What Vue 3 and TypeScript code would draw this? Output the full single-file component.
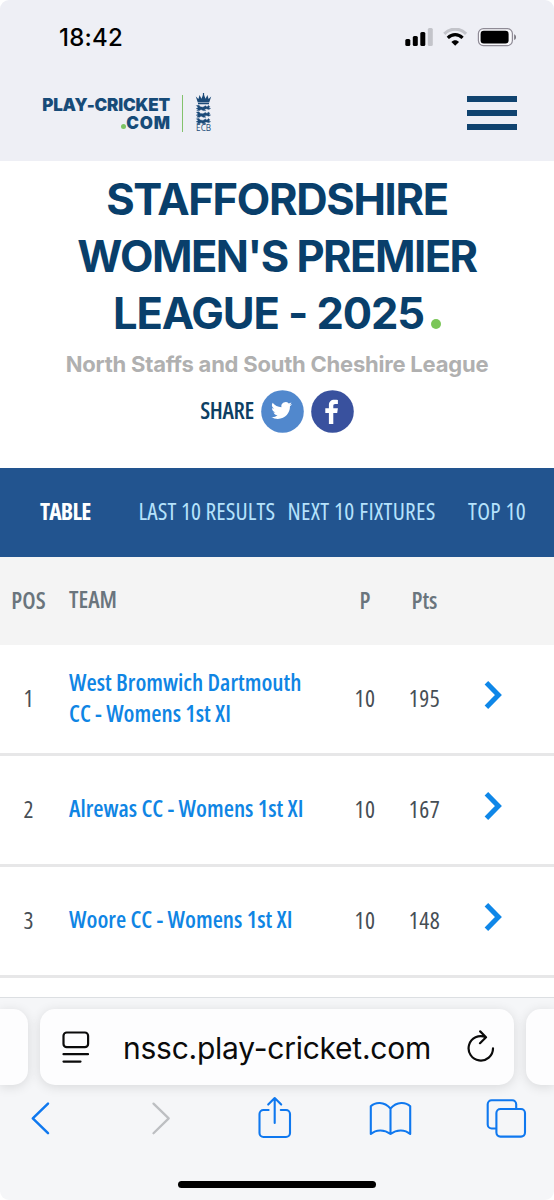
<script setup lang="ts">
interface Row {
  pos: number
  team: string
  played: number
  points: number
}

const tabs = [
  { label: 'TABLE', cls: 'tab-table' },
  { label: 'LAST 10 RESULTS', cls: 'tab-results' },
  { label: 'NEXT 10 FIXTURES', cls: 'tab-fixtures' },
  { label: 'TOP 10', cls: 'tab-top' },
]

const rows: Row[] = [
  { pos: 1, team: 'West Bromwich Dartmouth\nCC - Womens 1st XI', played: 10, points: 195 },
  { pos: 2, team: 'Alrewas CC - Womens 1st XI', played: 10, points: 167 },
  { pos: 3, team: 'Woore CC - Womens 1st XI', played: 10, points: 148 },
]

const lions = [12, 18.6, 25.2]
</script>

<template>
  <div class="phone">
    <header class="top">
      <div class="status">
        <span class="clock">18:42</span>
        <svg class="status-icons" width="112" height="20" viewBox="0 0 112 20">
          <rect x="0.3" y="11" width="5" height="7" rx="1.5" />
          <rect x="7.8" y="8" width="5" height="10" rx="1.5" />
          <rect x="15.3" y="4" width="5" height="14" rx="1.5" />
          <rect x="22.8" y="0" width="5" height="18" rx="1.5" fill="#c3c4ca" />
          <path d="M39.3 5.8C45.7-.4 54.7-.4 61.1 5.8" fill="none" stroke="#c3c4ca" stroke-width="3.2" />
          <path d="M42.8 9.8C47.2 5.6 53.2 5.6 57.6 9.8" fill="none" stroke="#000" stroke-width="3.2" />
          <path d="M46.4 14C48.6 11.6 51.8 11.6 54 14L50.2 17.8Z" />
          <rect x="73.4" y="0.6" width="34" height="17" rx="5" fill="#f8f8fb" stroke="#8f8b96" stroke-width="1.2" />
          <rect x="75.6" y="2.7" width="28" height="12.8" rx="3.2" />
          <path d="M109.2 6.2C111.6 7 111.6 11.2 109.2 12Z" fill="#77747d" />
        </svg>
      </div>
      <div class="brand-bar">
        <div class="wordmark">
          <div class="word-line play">PLAY-CRICKET</div>
          <div class="word-line com"><i></i>COM</div>
        </div>
        <div class="brand-rule"></div>
        <svg class="ecb" width="18" height="40" viewBox="0 0 18 40" fill="#1b4a78">
          <path d="M.8 3.4 3.4 6 4.6 2 6.4 5.8 8.5.8 10.6 5.8 12.4 2 13.6 6 16.2 3.4 14.2 9.6H2.8Z" />
          <path d="M3 10.1H14V11.2H3ZM7.9 0H9.1V3H7.9Z" />
          <path
            v-for="y in lions"
            :key="y"
            :transform="`translate(0 ${y})`"
            stroke="#1b4a78"
            stroke-width=".4"
            d="M1.4.6 4 .2 5.2 1.8 8 2.2 10.4.8 12 2 13.4.4 14.8 1.6 13.8 3 15.6 3.4 13.8 4.6 11.6 3.8 9.4 4.2 10.8 5.6H8.2L6 4.4 4.6 5.6H1.8L3.2 4.2 1.2 3.6 3.2 2.4Z"
          />
          <text x="8.6" y="38.2" text-anchor="middle" textLength="15" lengthAdjust="spacingAndGlyphs">ECB</text>
        </svg>
        <button class="menu" aria-label="Menu"><b></b><b></b><b></b></button>
      </div>
    </header>

    <section class="hero">
      <h1>
        <span class="l1">STAFFORDSHIRE</span>
        <span class="l2">WOMEN'S PREMIER</span>
        <span class="l3"><em>LEAGUE - 2025</em><i class="dot"></i></span>
      </h1>
      <p class="league"><span>North Staffs and South Cheshire League</span></p>
      <div class="share">
        <span class="share-label">SHARE</span>
        <svg width="43" height="43" viewBox="0 0 43 43">
          <circle cx="21.5" cy="21.5" r="21.3" fill="#5188cd" />
          <path
            transform="translate(10.2 10.1) scale(.87)"
            fill="#fff"
            d="M23.95 4.57a10 10 0 0 1-2.82.77 4.96 4.96 0 0 0 2.16-2.72c-.95.55-2 .96-3.13 1.18a4.92 4.92 0 0 0-8.38 4.48C7.69 8.1 4.07 6.13 1.64 3.16a4.92 4.92 0 0 0 1.52 6.57 4.9 4.9 0 0 1-2.23-.61v.06a4.92 4.92 0 0 0 3.95 4.83 5 5 0 0 1-2.21.08 4.94 4.94 0 0 0 4.6 3.42A9.87 9.87 0 0 1 0 19.54a13.99 13.99 0 0 0 7.55 2.21c9.05 0 14-7.5 14-13.98 0-.21 0-.42-.02-.63a9.94 9.94 0 0 0 2.46-2.55z"
          />
        </svg>
        <svg width="43" height="43" viewBox="0 0 43 43">
          <circle cx="21.5" cy="21.5" r="21.3" fill="#39519e" />
          <path fill="#fff" d="M17.9 34V22.9H14.3V18.3H17.9V15.2C17.9 11.7 20 9.8 23.3 9.8 24.8 9.8 26.1 9.9 26.9 10V14H24.3C22.6 14 22.3 14.9 22.3 16V18.3H26.9L26.2 22.9H22.3V34Z" />
        </svg>
      </div>
    </section>

    <nav class="tabs">
      <a v-for="t in tabs" :key="t.label" :class="t.cls">{{ t.label }}</a>
    </nav>

    <div class="grid head">
      <span class="c-pos">POS</span>
      <span class="c-team">TEAM</span>
      <span class="c-p">P</span>
      <span class="c-pts">Pts</span>
    </div>
    <div v-for="r in rows" :key="r.pos" class="grid row">
      <span class="c-pos">{{ r.pos }}</span>
      <a class="c-team">{{ r.team }}</a>
      <span class="c-p">{{ r.played }}</span>
      <span class="c-pts">{{ r.points }}</span>
      <svg class="go" width="20" height="28" viewBox="0 0 20 28">
        <path d="M2.4 1.8 14.4 14 2.4 26.2" fill="none" stroke="#0f87e8" stroke-width="5" />
      </svg>
    </div>
    <div class="filler"></div>

    <footer class="safari">
      <div class="pages">
        <div class="card"></div>
        <div class="card address">
          <svg class="site" width="28" height="34" viewBox="0 0 28 34" fill="none" stroke="#0b0b0b" stroke-width="2.2" stroke-linecap="round">
            <rect x="1.5" y="1.5" width="24.6" height="14.6" rx="3.2" />
            <path d="M1.5 23.2H26M1.5 30.6H18.5" />
          </svg>
          <span class="url">nssc.play-cricket.com</span>
          <svg width="28" height="34" viewBox="0 0 28 34" fill="none" stroke="#0b0b0b" stroke-width="2.2" stroke-linecap="round" stroke-linejoin="round">
            <path d="M26 18.4A12.2 12.2 0 1 1 18.6 7.1M13.2 1.4 19 7.2 13 13.2" />
          </svg>
        </div>
        <div class="card"></div>
      </div>
      <svg class="toolbar" width="554" height="50" viewBox="0 0 554 50" fill="none" stroke="#0f78ef" stroke-width="2.1" stroke-linecap="round" stroke-linejoin="round">
        <path d="M48 10.6 32.8 25.4 48 40.2" stroke-width="2.5" />
        <path d="M153.5 10.6 168.7 25.4 153.5 40.2" stroke="#bdbfc2" stroke-width="2.3" />
        <path d="M268.6 17H263.5A4 4 0 0 0 259.5 21V40A4 4 0 0 0 263.5 44H286A4 4 0 0 0 290 40V21A4 4 0 0 0 286 17H280.8M274.7 30V5.5M268.2 11.6 274.7 5 281.2 11.6" />
        <path d="M390.5 15.5C384 8 375 9 370.8 13.3V41C376 36.5 384 36 390.5 41 397 36 405 36.5 410.2 41V13.3C406 9 397 8 390.5 15.5ZM390.5 15.5V41" />
        <path d="M495.5 35.5H491.7A4 4 0 0 1 487.7 31.5V11.3A4 4 0 0 1 491.7 7.3H512.2A4 4 0 0 1 516.2 11.3V15.8" />
        <rect x="496.4" y="16" width="28.6" height="27.6" rx="4" />
      </svg>
      <div class="home"></div>
    </footer>
  </div>
</template>

<style>
html,
body {
  margin: 0;
  background: #fff;
}
</style>

<style scoped>
* {
  box-sizing: border-box;
}
.phone {
  width: 554px;
  height: 1200px;
  overflow: hidden;
  display: flex;
  flex-direction: column;
  background: #fff;
  border-radius: 9px;
  font-family: 'Open Sans', 'Noto Sans', sans-serif;
}
.top {
  height: 161px;
  flex: none;
  background: #eeeff5;
}
.status {
  height: 75px;
  padding: 0 37px 0 59px;
  display: flex;
  justify-content: space-between;
  align-items: center;
}
.clock {
  font: 550 24px/30px Inter, sans-serif;
  letter-spacing: 0.2px;
  color: #000;
}
.status-icons {
  margin-top: 1px;
}
.brand-bar {
  height: 76px;
  display: flex;
  align-items: center;
  padding: 0 37px 0 42px;
}
.wordmark {
  width: 128px;
  margin-top: 1px;
  font: 900 17px/18px Inter, sans-serif;
  color: #174b78;
}
.word-line {
  display: flex;
  justify-content: flex-end;
  white-space: nowrap;
}
.play {
  letter-spacing: -0.18px;
}
.com {
  letter-spacing: 0.9px;
  margin-right: -1px;
}
.com i {
  width: 5px;
  height: 5px;
  margin: 10.5px 0.5px 0 0;
  border-radius: 50%;
  background: #7dc463;
}
.brand-rule {
  width: 1.5px;
  height: 37px;
  margin-left: 11.5px;
  background: #83c26c;
}
.ecb {
  margin-left: 12px;
}
.ecb text {
  font: 8.5px 'Open Sans', sans-serif;
}
.menu {
  margin-left: auto;
  width: 50px;
  padding: 0;
  border: 0;
  background: none;
  display: grid;
  gap: 8px;
}
.menu b {
  height: 6px;
  background: #10436f;
}
.hero {
  height: 307px;
  flex: none;
  padding-top: 10px;
}
h1 {
  margin: 0;
  font: 700 43.5px/57px Inter, sans-serif;
  color: #093f6b;
}
h1 > span {
  display: flex;
  justify-content: center;
  white-space: nowrap;
}
.l1 {
  letter-spacing: -1.32px;
}
.l2 {
  letter-spacing: -1.52px;
}
.l3 {
  letter-spacing: -1.1px;
}
h1 em {
  font-style: normal;
}
.dot {
  align-self: flex-end;
  width: 10px;
  height: 10px;
  margin: 0 0 13px 7px;
  border-radius: 50%;
  background: #7ac657;
}
.league {
  margin: 6px 0 0;
  display: flex;
  justify-content: center;
  font: 700 22px/32px Inter, sans-serif;
  letter-spacing: -0.22px;
  color: #b0b0b0;
  white-space: nowrap;
}
.share {
  display: flex;
  align-items: center;
  justify-content: center;
  gap: 7px;
  margin-top: 10px;
}
.share-label {
  margin-bottom: 3px;
  font-size: 23.5px;
  font-weight: 600;
  font-stretch: 75%;
  letter-spacing: -0.35px;
  color: #0d3f64;
}
.tabs {
  height: 89px;
  flex: none;
  display: flex;
  align-items: center;
  background: #22548f;
  color: #b5e2fc;
  font-size: 23.5px;
  font-stretch: 75%;
  white-space: nowrap;
  padding: 0 0 4px 40px;
}
.tab-table {
  width: 98.5px;
  color: #fff;
  font-weight: 700;
  letter-spacing: -0.8px;
}
.tab-results {
  width: 149px;
  letter-spacing: 0.1px;
}
.tab-fixtures {
  width: 180.5px;
  letter-spacing: 0.3px;
}
.tab-top {
  letter-spacing: 0.3px;
}
.grid {
  display: grid;
  flex: none;
  grid-template-columns: 57px 270px 76px 43px 1fr;
  align-items: center;
  padding-bottom: 3px;
  font-size: 23.5px;
  font-stretch: 75%;
  color: #464e55;
}
.head {
  height: 88px;
  background: #f4f4f4;
  color: #6a757d;
  font-weight: 600;
}
.row {
  height: 111px;
  border-bottom: 3px solid #e7e7e8;
}
.c-pos,
.c-p,
.c-pts {
  text-align: center;
}
.row .c-p,
.row .c-pts {
  letter-spacing: 0.5px;
}
.c-team {
  padding-left: 12px;
  white-space: pre-line;
  line-height: 31px;
}
.row .c-team {
  color: #0f85e4;
  font-weight: 600;
}
.go {
  margin: 0 0 6px 38px;
}
.filler {
  flex: 1;
}
.safari {
  flex: none;
  height: 203px;
  background: #f5f6f8;
  border-top: 1px solid #dcdfe2;
}
.pages {
  display: grid;
  grid-template-columns: 28px 474px 28px;
  gap: 12px;
  padding-top: 11px;
}
.card {
  height: 76px;
  background: #fdfdfe;
  border-radius: 15px;
  box-shadow: 0 2px 12px rgba(0, 0, 0, 0.12);
}
.card:first-child {
  border-radius: 0 15px 15px 0;
}
.card:last-child {
  border-radius: 15px 0 0 15px;
}
.address {
  display: flex;
  align-items: center;
  justify-content: space-between;
  padding: 0 19px 0 22px;
}
.site {
  margin-top: 2px;
}
.url {
  margin: 2px 3px 0 0;
  font: 400 30px/40px Inter, sans-serif;
  letter-spacing: -0.25px;
  color: #0b0b0b;
}
.toolbar {
  display: block;
  margin-top: 8px;
}
.home {
  width: 198px;
  height: 7px;
  margin: 38px auto 0;
  border-radius: 4px;
  background: #000;
}
</style>
